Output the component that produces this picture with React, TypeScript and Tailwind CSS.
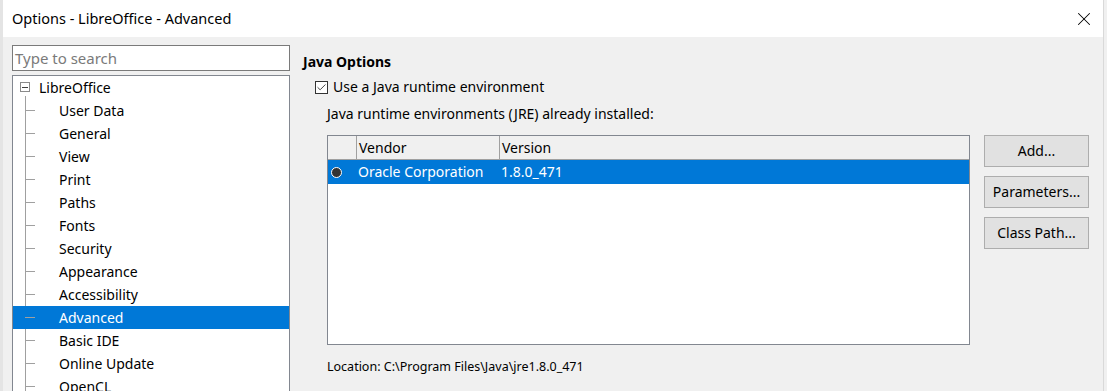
import { Check, X } from 'lucide-react';

const items = [
  'User Data',
  'General',
  'View',
  'Print',
  'Paths',
  'Fonts',
  'Security',
  'Appearance',
  'Accessibility',
  'Advanced',
  'Basic IDE',
  'Online Update',
  'OpenCL',
];

function TreeRow({ label, selected }: { label: string; selected?: boolean }) {
  return (
    <div
      className={
        'relative flex h-[23px] items-center pl-[46px] ' +
        (selected ? 'bg-[#0078d7] text-white' : 'text-black')
      }
    >
      <div className="absolute left-[12px] top-[11px] h-px w-[10px] bg-[#a0a0a0]" />
      <span>{label}</span>
    </div>
  );
}

function SideButton({ label }: { label: string }) {
  return (
    <button className="flex h-[32px] w-[105px] items-center justify-center border border-[#adadad] bg-[#e1e1e1] text-black">
      {label}
    </button>
  );
}

export default function App() {
  return (
    <div
      className="flex h-[391px] w-[1107px] overflow-hidden bg-[#f0f0f0] text-[14px] leading-none"
      style={{ fontFamily: '"Noto Sans", "Open Sans", sans-serif' }}
    >
      {/* strip of the window behind */}
      <div className="w-[3px] shrink-0 bg-[#e4e4e4]" />

      <div className="flex w-[1101px] shrink-0 flex-col border-r border-[#d9d9d9]">
        {/* title bar */}
        <div className="flex h-[37px] shrink-0 items-center justify-between bg-white pl-[9px] pr-[8px]">
          <span className="text-[14.5px] text-black">Options - LibreOffice - Advanced</span>
          <X className="h-[22px] w-[22px] text-black" strokeWidth={1.1} />
        </div>

        <div className="flex flex-1 pt-[8px]">
          {/* left column */}
          <div className="ml-[9px] flex w-[278px] shrink-0 flex-col gap-[4px]">
            <div className="flex h-[26px] items-center border border-[#7a7a7a] bg-white px-[2px] text-[15px] text-[#7a7a7a]">
              Type to search
            </div>
            <div className="relative flex-1 border border-[#828790] bg-white">
              <div className="absolute left-[12px] top-[20px] bottom-0 w-px bg-[#a0a0a0]" />
              <div className="relative flex h-[23px] items-center pl-[26px]">
                <div className="absolute left-[7px] top-[6px] flex h-[10px] w-[10px] items-center justify-center border border-[#8a8a8a] bg-white">
                  <div className="h-px w-[6px] bg-[#404040]" />
                </div>
                <span>LibreOffice</span>
              </div>
              {items.map((it) => (
                <TreeRow key={it} label={it} selected={it === 'Advanced'} />
              ))}
            </div>
          </div>

          {/* right pane */}
          <div className="flex flex-1 flex-col pl-[13px] pt-[10px]">
            <div className="font-bold">Java Options</div>
            <div className="mt-[11px] flex items-center pl-[12px]">
              <div className="flex h-[13px] w-[13px] items-center justify-center border border-[#333] bg-white">
                <Check className="h-[11px] w-[11px] text-[#333]" strokeWidth={2} />
              </div>
              <span className="ml-[5px]">Use a Java runtime environment</span>
            </div>
            <div className="mt-[13px] pl-[24px]">Java runtime environments (JRE) already installed:</div>

            <div className="mt-[14px] flex pl-[24px]">
              <div className="flex h-[210px] w-[643px] flex-col border border-[#828790] bg-white">
                <div className="flex h-[24px] border-b border-[#a0a0a0] bg-[#f0f0f0]">
                  <div className="w-[29px] border-r border-[#a0a0a0]" />
                  <div className="flex w-[143px] items-center border-r border-[#a0a0a0] pl-[2px]">Vendor</div>
                  <div className="flex items-center pl-[2px]">Version</div>
                </div>
                <div className="flex h-[24px] items-center bg-[#0078d7] text-white">
                  <div className="flex w-[29px] items-center pl-[3px]">
                    <div className="h-[11px] w-[11px] rounded-full border-[1.5px] border-white bg-[#333]" />
                  </div>
                  <div className="w-[143px] pl-[1px]">Oracle Corporation</div>
                  <div className="pl-[1px]">1.8.0_471</div>
                </div>
              </div>

              <div className="ml-[14px] flex flex-col gap-[9px]">
                <SideButton label="Add..." />
                <SideButton label="Parameters..." />
                <SideButton label="Class Path..." />
              </div>
            </div>

            <div className="mt-[16px] pl-[24px] text-[12.5px]">Location: C:\Program Files\Java\jre1.8.0_471</div>
          </div>
        </div>
      </div>

      <div className="flex-1 bg-[#f0f0f0]" />
    </div>
  );
}
